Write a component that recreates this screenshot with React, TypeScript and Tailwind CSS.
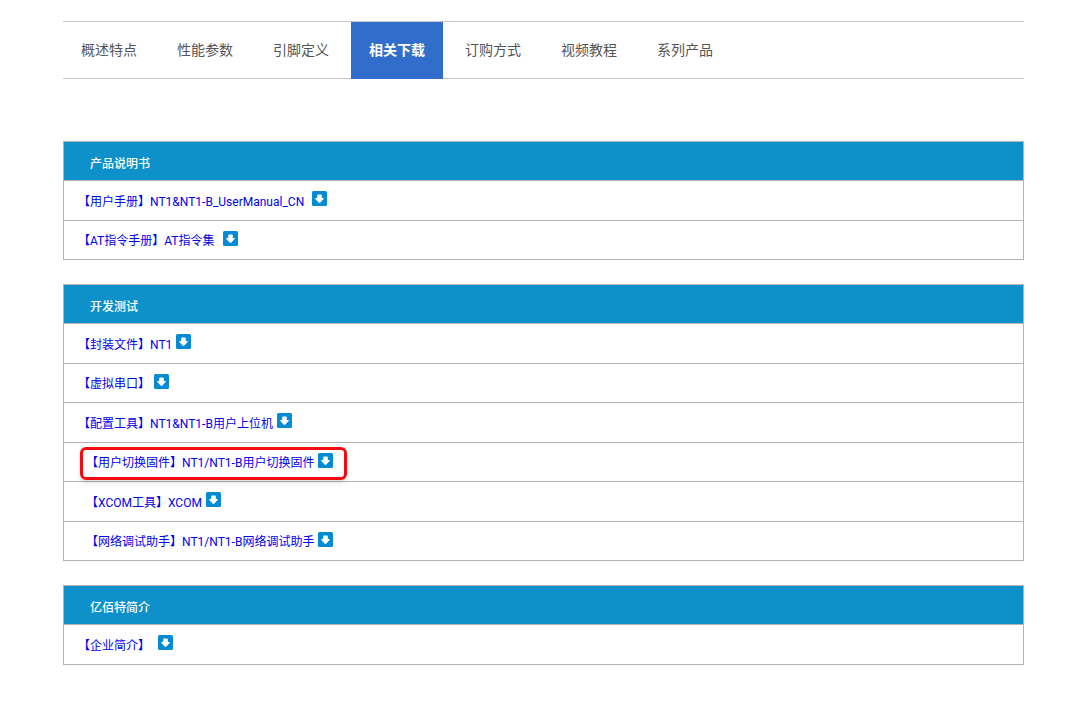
import React, { useState } from 'react';
import clsx from 'clsx';

type DownloadItem = {
  category: string;
  name?: string;
  indented?: boolean;
  spaced?: boolean;
  highlighted?: boolean;
};

type DownloadGroup = {
  title: string;
  items: DownloadItem[];
};

const tabs = ['概述特点', '性能参数', '引脚定义', '相关下载', '订购方式', '视频教程', '系列产品'];

const groups: DownloadGroup[] = [
  {
    title: '产品说明书',
    items: [
      { category: '用户手册', name: 'NT1&NT1-B_UserManual_CN', spaced: true },
      { category: 'AT指令手册', name: 'AT指令集', spaced: true },
    ],
  },
  {
    title: '开发测试',
    items: [
      { category: '封装文件', name: 'NT1' },
      { category: '虚拟串口' },
      { category: '配置工具', name: 'NT1&NT1-B用户上位机' },
      { category: '用户切换固件', name: 'NT1/NT1-B用户切换固件', indented: true, highlighted: true },
      { category: 'XCOM工具', name: 'XCOM', indented: true },
      { category: '网络调试助手', name: 'NT1/NT1-B网络调试助手', indented: true },
    ],
  },
  {
    title: '亿佰特简介',
    items: [{ category: '企业简介', spaced: true }],
  },
];

function DownloadIcon() {
  return (
    <svg viewBox="0 0 15 15" className="mb-1.5 h-[15px] w-[15px] shrink-0" aria-hidden="true">
      <rect width="15" height="15" rx="1.5" fill="#058bd5" />
      <path
        d="M5.2 4.2Q5.2 3.4 6 3.4H9Q9.8 3.4 9.8 4.2V7H11.2Q12.4 7 11.6 8L8.4 11.5Q7.5 12.4 6.6 11.5L3.4 8Q2.6 7 3.8 7H5.2Z"
        fill="#fff"
      />
    </svg>
  );
}

function DownloadLink({ item }: { item: DownloadItem }) {
  return (
    <a
      href="#"
      className={clsx('inline-flex items-center text-[#0000ee]', item.spaced ? 'gap-2' : 'gap-1')}
    >
      <span>
        【{item.category}】{item.name}
      </span>
      <DownloadIcon />
    </a>
  );
}

function DownloadTable({ group }: { group: DownloadGroup }) {
  return (
    <table className="w-full border-collapse border border-[#b4b4b4] text-left text-xs">
      <thead>
        <tr className="h-[39px] bg-[#0e91ca] text-white">
          <th scope="col" className="border border-[#b4b4b4] px-[26px] pt-1.5 font-medium">
            {group.title}
          </th>
        </tr>
      </thead>
      <tbody>
        {group.items.map((item) => (
          <tr key={item.category} className="odd:h-10 even:h-[39px]">
            <td
              className={clsx(
                'border border-[#b4b4b4] pt-0.5 pr-4',
                item.indented ? 'pl-[22px]' : 'pl-[14px]'
              )}
            >
              <div className="relative flex w-fit items-center">
                <DownloadLink item={item} />
                {item.highlighted && (
                  <span className="pointer-events-none absolute -inset-y-1.5 -right-3.5 -left-1.5 rounded-md border-3 border-[#f30b12] shadow-md" />
                )}
              </div>
            </td>
          </tr>
        ))}
      </tbody>
    </table>
  );
}

export default function App() {
  const [activeTab, setActiveTab] = useState('相关下载');

  return (
    <div className="min-h-screen bg-white pt-[21px] pr-14 pb-12 pl-[63px] font-[Roboto,'Noto_Sans_CJK_SC',sans-serif]">
      {/* Section tabs */}
      <nav className="flex gap-1 border-y border-[#c8c8c8]">
        {tabs.map((tab) => (
          <button
            key={tab}
            type="button"
            onClick={() => setActiveTab(tab)}
            className={clsx(
              '-mb-px h-[57px] px-[18px] pb-0.5 text-sm',
              tab === activeTab ? 'bg-[#316ecb] font-bold text-white' : 'text-[#555]'
            )}
          >
            {tab}
          </button>
        ))}
      </nav>

      {/* Download lists */}
      <main className="mt-[62px] flex flex-col gap-6">
        {groups.map((group) => (
          <DownloadTable key={group.title} group={group} />
        ))}
      </main>
    </div>
  );
}
